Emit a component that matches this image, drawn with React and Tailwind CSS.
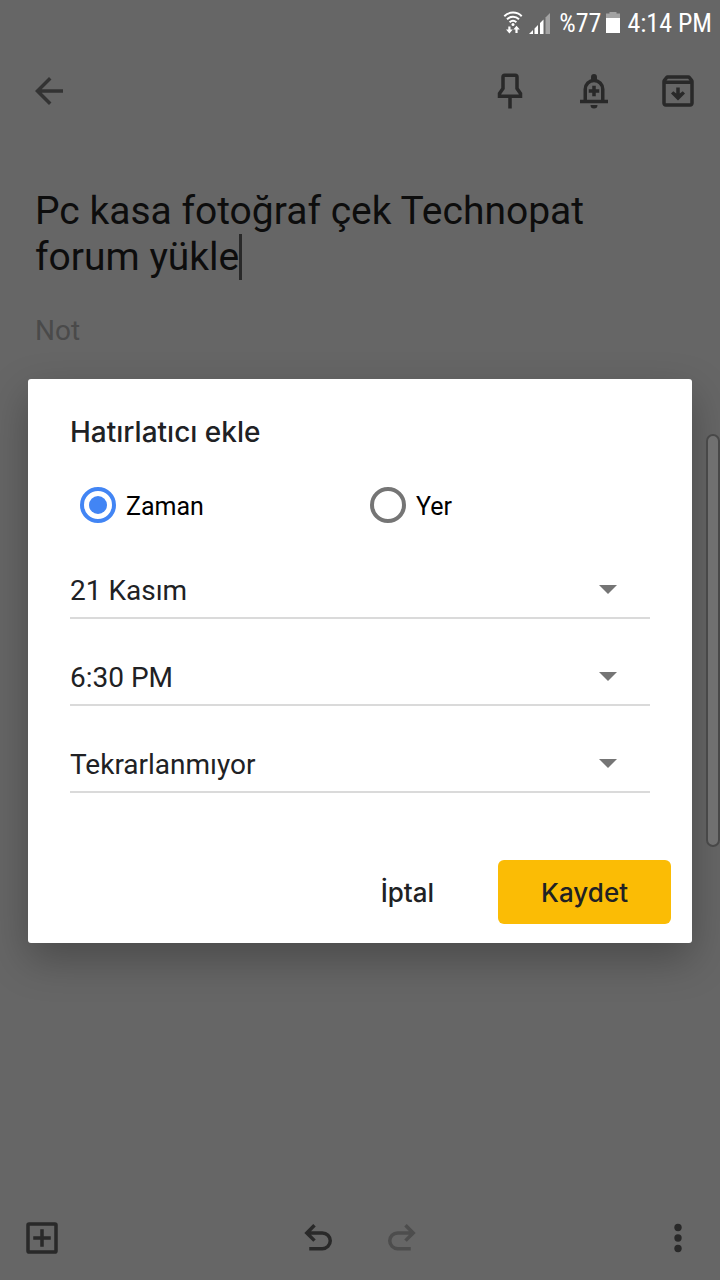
import React, { useState } from "react";

function Icon({ children, className = "" }) {
  return (
    <svg
      viewBox="0 0 24 24"
      className={`size-[42px] ${className}`}
      fill="none"
      stroke="currentColor"
      strokeWidth="2"
      aria-hidden="true"
    >
      {children}
    </svg>
  );
}

function IconButton({ label, children, className = "", disabled = false }) {
  return (
    <button type="button" aria-label={label} disabled={disabled} className={`shrink-0 ${className}`}>
      <Icon>{children}</Icon>
    </button>
  );
}

function StatusBar() {
  return (
    <div className="flex h-12 items-center justify-end pr-2 pb-[3px] font-['Roboto_Condensed','Roboto',sans-serif] text-[26px] leading-none text-white">
      <svg viewBox="0 0 20 24" className="mr-[6px] h-6 w-5" fill="none" stroke="currentColor" strokeWidth="2" aria-hidden="true">
        <path d="M1.3 5.2C6 .4 14 .4 18.700 5.200" />
        <path d="M4 8.200c3.400-3.200 8.600-3.200 12 0" />
        <path d="M6.600 11.200c2-1.800 4.800-1.800 6.800 0" />
        <circle cx="10" cy="13.500" r="1.500" fill="currentColor" stroke="none" />
        <path d="M3 18.500h2.300v-3h2.200v3h2.300L6.400 22.500zM10.300 18.500h2.100v3.500h2.200v-3.500h2.200L13.500 14.800z" fill="currentColor" stroke="none" />
      </svg>
      <svg viewBox="0 0 22 22" className="mr-2 h-[22px] w-[22px]" fill="currentColor" aria-hidden="true">
        <path d="M0 22l4-4v4zM5.500 16.500l3.500-3.500v9H5.500zM11 11l3.500-3.500V22H11z" />
        <path d="M16.500 5.500L21 1v21h-4.500z" opacity=".4" />
      </svg>
      <span className="mr-[5px]">%77</span>
      <svg viewBox="0 0 14 21" className="mr-[7px] h-[21px] w-[14px]" fill="currentColor" aria-hidden="true">
        <path d="M3.500 0h7v1.500H14V6H0V1.500h3.500z" opacity=".4" />
        <path d="M0 6h14v15H0z" />
      </svg>
      <span>4:14 PM</span>
    </div>
  );
}

function RadioOption({ id, label, checked, onChange }) {
  return (
    <label htmlFor={id} className="flex items-center gap-[10px] pl-[10px] text-[25px] leading-[35px] text-black">
      <input
        id={id}
        type="radio"
        name="reminder-type"
        checked={checked}
        onChange={onChange}
        className="size-9 shrink-0 appearance-none rounded-full border-[4px] border-[#757575] bg-clip-content p-[5px] checked:border-[#4285f4] checked:bg-[#4285f4]"
      />
      <span className="pt-[3px]">{label}</span>
    </label>
  );
}

function SelectRow({ label, options }) {
  return (
    <div className="relative border-b-2 border-[#dadada]">
      <select
        aria-label={label}
        className="block h-[54px] w-full appearance-none bg-transparent pt-[2px] text-[28px] text-[#202124] outline-none"
      >
        {options.map((option) => (
          <option key={option}>{option}</option>
        ))}
      </select>
      <svg
        viewBox="0 0 18 9"
        className="pointer-events-none absolute right-[33px] top-[22px] h-[9px] w-[18px] text-[#757575]"
        fill="currentColor"
        aria-hidden="true"
      >
        <path d="M0 0h18L9 9z" />
      </svg>
    </div>
  );
}

function ReminderDialog() {
  const [type, setType] = useState("time");
  return (
    <div className="absolute inset-0 flex items-center px-7 pt-[42px]">
      <form
        role="dialog"
        aria-labelledby="dialog-title"
        onSubmit={(e) => e.preventDefault()}
        className="w-full rounded-[3px] bg-white pb-[19px] pt-[37px] shadow-[0_16px_42px_rgba(0,0,0,0.28)]"
      >
        <div className="px-[42px]">
          <h2 id="dialog-title" className="font-['Inter',sans-serif] text-[28px] font-medium leading-8 text-[#202124]">
            Hatırlatıcı ekle
          </h2>
          <div className="mt-[38px] grid grid-cols-2">
            <RadioOption id="type-time" label="Zaman" checked={type === "time"} onChange={() => setType("time")} />
            <RadioOption id="type-place" label="Yer" checked={type === "place"} onChange={() => setType("place")} />
          </div>
          <div className="mt-[39px] flex flex-col gap-[31px]">
            <SelectRow label="Tarih" options={["21 Kasım"]} />
            <SelectRow label="Saat" options={["6:30 PM"]} />
            <SelectRow label="Tekrar" options={["Tekrarlanmıyor"]} />
          </div>
        </div>
        <div className="mt-[67px] flex justify-end gap-[21px] pr-[21px] font-['Inter',sans-serif] text-[26px] font-medium text-[#202124]">
          <button type="button" className="h-16 rounded-md px-[43px]">İptal</button>
          <button type="submit" className="h-16 rounded-md bg-[#fbbc05] px-[43px]">Kaydet</button>
        </div>
      </form>
    </div>
  );
}

export default function App() {
  return (
    <div className="relative flex min-h-screen flex-col bg-[#666666] font-['Roboto',sans-serif] text-[#292929]">
      <StatusBar />
      <header className="flex h-[86px] items-center gap-[42px] pl-7 pr-[21px]">
        <IconButton label="Geri" className="mr-auto text-[#333333]">
          <path d="M20 11H7.830l5.590-5.590L12 4l-8 8 8 8 1.410-1.410L7.830 13H20z" fill="currentColor" stroke="none" />
        </IconButton>
        <IconButton label="Sabitle">
          <path d="M8 4a1 1 0 0 1 1-1h6a1 1 0 0 1 1 1v6.500l2 3V15H6v-1.500l2-3zM12 15v7" />
        </IconButton>
        <IconButton label="Hatırlatıcı">
          <path d="M7 18v-7a5 5 0 0 1 10 0v7M4 18h16M12 9v6M9 12h6" />
          <path d="M10.300 6V4a1.700 1.700 0 0 1 3.400 0v2zM10 20h4a2 2 0 0 1-4 0z" fill="currentColor" stroke="none" />
        </IconButton>
        <IconButton label="Arşivle">
          <path
            d="M20.540 5.230l-1.390-1.680C18.880 3.210 18.470 3 18 3H6c-.47 0-.88.21-1.160.55L3.460 5.230C3.170 5.570 3 6.020 3 6.500V19c0 1.100.9 2 2 2h14c1.100 0 2-.9 2-2V6.500c0-.48-.17-.93-.46-1.270zM6.240 5h11.520l.83 1H5.420zM5 19V8h14v11z"
            fill="currentColor"
            stroke="none"
            fillRule="evenodd"
          />
          <path d="M16 13.400l-4 4-4-4 1.300-1.300 1.700 1.300V10h2v3.400l1.700-1.300z" fill="currentColor" stroke="none" />
        </IconButton>
      </header>

      <main className="flex flex-1 flex-col px-[35px] pt-[54px]">
        <div className="relative">
          <textarea
            aria-label="Başlık"
            rows={2}
            defaultValue="Pc kasa fotoğraf çek Technopat forum yükle"
            className="block w-full resize-none overflow-hidden bg-transparent text-[39px] leading-[46px] text-[#0d0d0d] outline-none"
          />
          <span className="absolute bottom-0 left-[204px] h-[46px] w-[3px] bg-[#292929]" aria-hidden="true" />
        </div>
        <input
          aria-label="Not"
          placeholder="Not"
          className="mt-[27px] h-[46px] w-full bg-transparent text-[28px] text-[#292929] outline-none placeholder:text-[#4a4a4a]"
        />
      </main>

      <footer className="grid h-[84px] grid-cols-3 items-center px-[21px]">
        <IconButton label="Ekle" className="justify-self-start">
          <rect x="4" y="4" width="16" height="16" rx=".6" />
          <path d="M12 7v10M7 12h10" />
        </IconButton>
        <div className="flex justify-center gap-[42px]">
          <IconButton label="Geri al">
            <path d="M5.700 9.100h8.800a4.500 4.500 0 0 1 0 9H7M10 4.700L5.600 9.100l4.400 4.400" />
          </IconButton>
          <IconButton label="Yinele" disabled className="text-[#4d4d4d]">
            <path d="M18.300 9.100H9.500a4.500 4.500 0 0 0 0 9H17M14 4.700l4.400 4.400-4.400 4.400" />
          </IconButton>
        </div>
        <IconButton label="Diğer" className="justify-self-end">
          <g fill="currentColor" stroke="none">
            <circle cx="12" cy="6" r="2.100" />
            <circle cx="12" cy="12" r="2.100" />
            <circle cx="12" cy="18" r="2.100" />
          </g>
        </IconButton>
      </footer>

      <ReminderDialog />
      <div className="absolute right-0 top-[434px] h-[413px] w-[14px] rounded-full border-2 border-[#484848] bg-[#707070]" aria-hidden="true" />
    </div>
  );
}
